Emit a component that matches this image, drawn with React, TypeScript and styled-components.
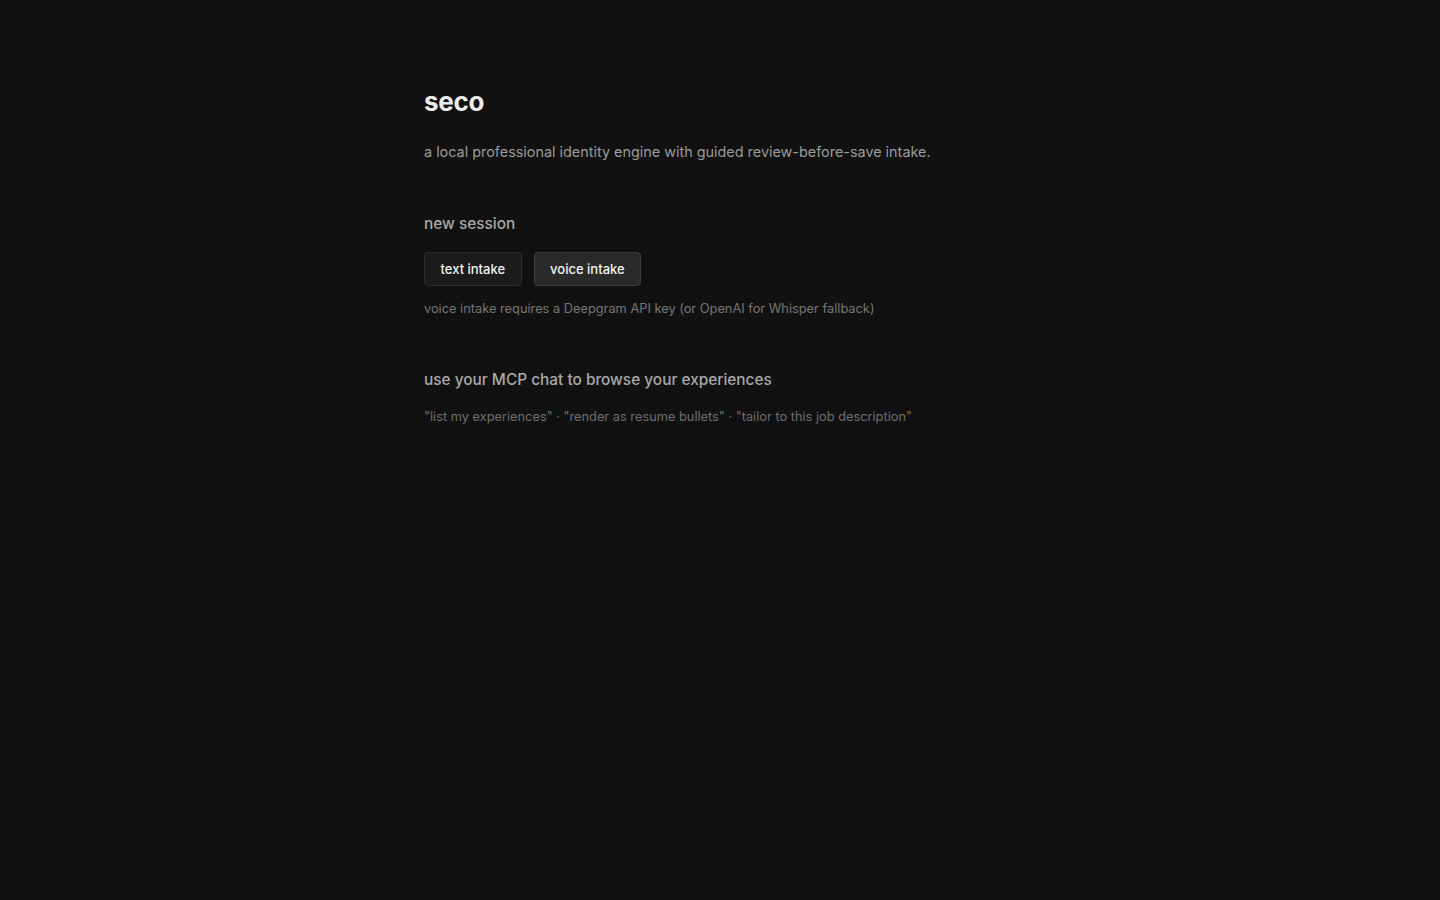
import React from 'react';
import styled, { createGlobalStyle } from 'styled-components';

const GlobalStyle = createGlobalStyle`
  html, body {
    margin: 0;
    padding: 0;
    background: #111111;
    min-height: 100%;
  }
  body {
    font-family: Inter, "Noto Sans", "Liberation Sans", sans-serif;
    -webkit-font-smoothing: antialiased;
  }
`;

const Page = styled.main`
  min-height: 100vh;
  background: #111111;
`;

const Container = styled.div`
  max-width: 592px;
  margin: 0 auto;
  padding: 86px 24px 0;
`;

const Title = styled.h1`
  margin: 0;
  font-size: 26px;
  line-height: 32px;
  font-weight: 700;
  color: #ececec;
  letter-spacing: -0.3px;
`;

const Subtitle = styled.p`
  margin: 23px 0 0;
  font-size: 14.4px;
  line-height: 22px;
  color: #9a9a9a;
`;

const Section = styled.section<{ $top: number }>`
  margin-top: ${(p) => p.$top}px;
`;

const SectionTitle = styled.h2`
  margin: 0;
  font-size: 15.4px;
  line-height: 22px;
  font-weight: 500;
  color: #a8a8a8;
`;

const ButtonRow = styled.div`
  display: flex;
  gap: 12px;
  margin-top: 17px;
`;

const Button = styled.button<{ $active?: boolean }>`
  height: 34px;
  padding: 0 15.5px;
  border-radius: 4px;
  border: 1px solid ${(p) => (p.$active ? '#3c3c3c' : '#2c2c2c')};
  background: ${(p) => (p.$active ? '#2a2a2a' : '#1b1b1b')};
  color: #f2f2f2;
  font-family: inherit;
  font-size: 13px;
  font-weight: 500;
  cursor: pointer;
`;

const Note = styled.p<{ $top: number; $color: string }>`
  margin: ${(p) => p.$top}px 0 0;
  font-size: 12.8px;
  line-height: 18px;
  color: ${(p) => p.$color};
`;

export default function App() {
  return (
    <Page>
      <GlobalStyle />
      <Container>
        <Title>seco</Title>
        <Subtitle>a local professional identity engine with guided review-before-save intake.</Subtitle>

        <Section $top={50}>
          <SectionTitle>new session</SectionTitle>
          <ButtonRow>
            <Button>text intake</Button>
            <Button $active>voice intake</Button>
          </ButtonRow>
          <Note $top={14} $color="#767676">
            voice intake requires a Deepgram API key (or OpenAI for Whisper fallback)
          </Note>
        </Section>

        <Section $top={51}>
          <SectionTitle>use your MCP chat to browse your experiences</SectionTitle>
          <Note $top={17} $color="#6e6e6e">
            "list my experiences" · "render as resume bullets" · "tailor to this job description"
          </Note>
        </Section>
      </Container>
    </Page>
  );
}
